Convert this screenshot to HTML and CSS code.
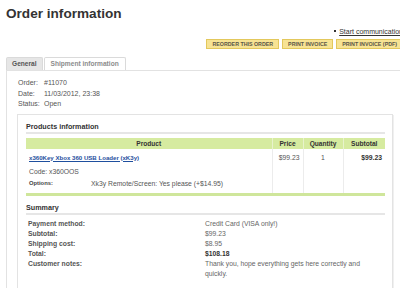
FILE: index.html
```html
<!DOCTYPE html>
<html>
<head>
<meta charset="utf-8">
<title>Order information</title>
<link rel="stylesheet" href="styles.css">
</head>
<body>
<div class="page">
  <h1 class="title">Order information</h1>
  <div class="actions">
    <ul class="links"><li><a href="#">Start communication</a></li></ul>
    <div class="buttons">
      <span class="btn">Reorder this order</span>
      <span class="btn">Print invoice</span>
      <span class="btn">Print invoice (pdf)</span>
    </div>
  </div>
  <div class="tabs">
    <span class="tab active">General</span>
    <span class="tab">Shipment information</span>
  </div>
  <div class="panel">
    <div class="meta">
      <span>Order:</span><span>#11070</span>
      <span>Date:</span><span>11/03/2012, 23:38</span>
      <span>Status:</span><span>Open</span>
    </div>
    <div class="box">
      <h2 class="heading">Products information</h2>
      <table class="products">
        <colgroup>
          <col class="c-product"><col class="c-price"><col class="c-qty"><col class="c-sub">
        </colgroup>
        <thead>
          <tr><th>Product</th><th>Price</th><th>Quantity</th><th>Subtotal</th></tr>
        </thead>
        <tbody>
          <tr>
            <td>
              <a class="plink" href="#">x360Key Xbox 360 USB Loader (xK3y)</a>
              <div class="code">Code: x360OOS</div>
              <div class="opts"><span class="opt-label">Options:</span><span>Xk3y Remote/Screen: Yes please (+$14.95)</span></div>
            </td>
            <td class="num">$99.23</td>
            <td class="center">1</td>
            <td class="num strong">$99.23</td>
          </tr>
        </tbody>
      </table>
      <h2 class="heading summary-head">Summary</h2>
      <div class="summary">
        <span class="lbl">Payment method:</span><span>Credit Card (VISA only!)</span>
        <span class="lbl">Subtotal:</span><span>$99.23</span>
        <span class="lbl">Shipping cost:</span><span>$8.95</span>
        <span class="lbl">Total:</span><span class="strong">$108.18</span>
        <span class="lbl">Customer notes:</span><span>Thank you, hope everything gets here correctly and quickly.</span>
      </div>
    </div>
  </div>
</div>
</body>
</html>
```
FILE: styles.css
```css
html, body {
  margin: 0;
  padding: 0;
  overflow: hidden;
  background: #fff;
}
body {
  width: 400px;
  height: 288px;
  font-family: "Liberation Sans", Arial, sans-serif;
  color: #555;
}
.page {
  width: 399px;
  margin-left: 6px;
}
.title {
  margin: 0;
  padding-top: 6px;
  font-size: 13.6px;
  line-height: 16px;
  font-weight: bold;
  color: #333;
}
.actions {
  display: flex;
  flex-direction: column;
  align-items: flex-end;
}
.links {
  list-style: none;
  margin: 4.5px 0 0;
  padding: 0 2px 0 0;
  font-size: 7px;
  line-height: 9px;
}
.links li {
  display: flex;
  align-items: center;
  gap: 3px;
}
.links li::before {
  content: "";
  width: 2px;
  height: 2px;
  background: #333;
}
.links a {
  color: #333;
  text-decoration: underline;
}
.buttons {
  display: flex;
  gap: 3px;
  margin-top: 3.5px;
  margin-right: 2px;
}
.btn {
  display: block;
  height: 8px;
  line-height: 8px;
  padding: 0 5px;
  background: #f7e393;
  border: 1px solid #e3c85c;
  font-size: 5.3px;
  font-weight: bold;
  color: #5a5648;
  text-transform: uppercase;
  white-space: nowrap;
}
.tabs {
  display: flex;
  gap: 1px;
  margin-top: 8px;
}
.tab {
  display: block;
  height: 12px;
  line-height: 12px;
  padding: 0 6px;
  border: 1px solid #dadada;
  border-bottom: 0;
  border-radius: 2px 2px 0 0;
  font-size: 6.6px;
  font-weight: bold;
  color: #8c8c8c;
  background: #fff;
}
.tab.active {
  padding: 0 5px;
  background: #e6e6e6;
  color: #555;
}
.panel {
  border-top: 1px solid #e2e2e2;
  border-left: 1px solid #e2e2e2;
  padding-top: 7px;
}
.meta {
  display: grid;
  grid-template-columns: 26px auto;
  padding-left: 11px;
  font-size: 7px;
  line-height: 10.5px;
}
.box {
  margin: 4.5px 12px 0 10px;
  padding: 6.5px 7px 30px 8px;
  border: 1px solid #e3e3e3;
  box-shadow: 1px 1px 0 #f0f0f0;
}
.heading {
  margin: 0;
  font-size: 7.2px;
  line-height: 9px;
  font-weight: bold;
  color: #333;
  padding-bottom: 1.5px;
  border-bottom: 2px solid #e6e6e6;
}
.products {
  width: 100%;
  margin-top: 4px;
  border-collapse: collapse;
  table-layout: fixed;
}
.c-product { width: 246px; }
.c-price { width: 31px; }
.c-qty { width: 40px; }
.c-sub { width: 42px; }
.products th {
  height: 11px;
  padding: 0;
  line-height: 11px;
  background: #d6eba0;
  font-size: 6.6px;
  font-weight: bold;
  color: #333;
  text-align: center;
}
.products th + th {
  border-left: 1px solid #e8f3cc;
}
.products td {
  vertical-align: top;
  padding: 3.5px 3px 5.5px;
  font-size: 6.8px;
  line-height: 9px;
  border-bottom: 3px solid #cfe69b;
}
.products td + td {
  border-left: 1px solid #ececec;
}
.num { text-align: right; }
.center { text-align: center; }
.strong { font-weight: bold; color: #333; }
.plink {
  display: block;
  font-size: 6.1px;
  font-weight: bold;
  color: #1f4f9e;
  text-decoration: underline;
}
.code {
  margin-top: 5px;
}
.opts {
  display: flex;
  margin-top: 3px;
}
.opt-label {
  width: 62px;
  flex: none;
  font-size: 5.8px;
  font-weight: bold;
  color: #444;
}
.summary-head {
  margin-top: 6.5px;
}
.summary {
  display: grid;
  grid-template-columns: 177px 160px;
  margin-top: 4px;
  padding-left: 2px;
  font-size: 6.8px;
  line-height: 10px;
  color: #666;
}
.summary .lbl {
  font-weight: bold;
  color: #555;
}
```
